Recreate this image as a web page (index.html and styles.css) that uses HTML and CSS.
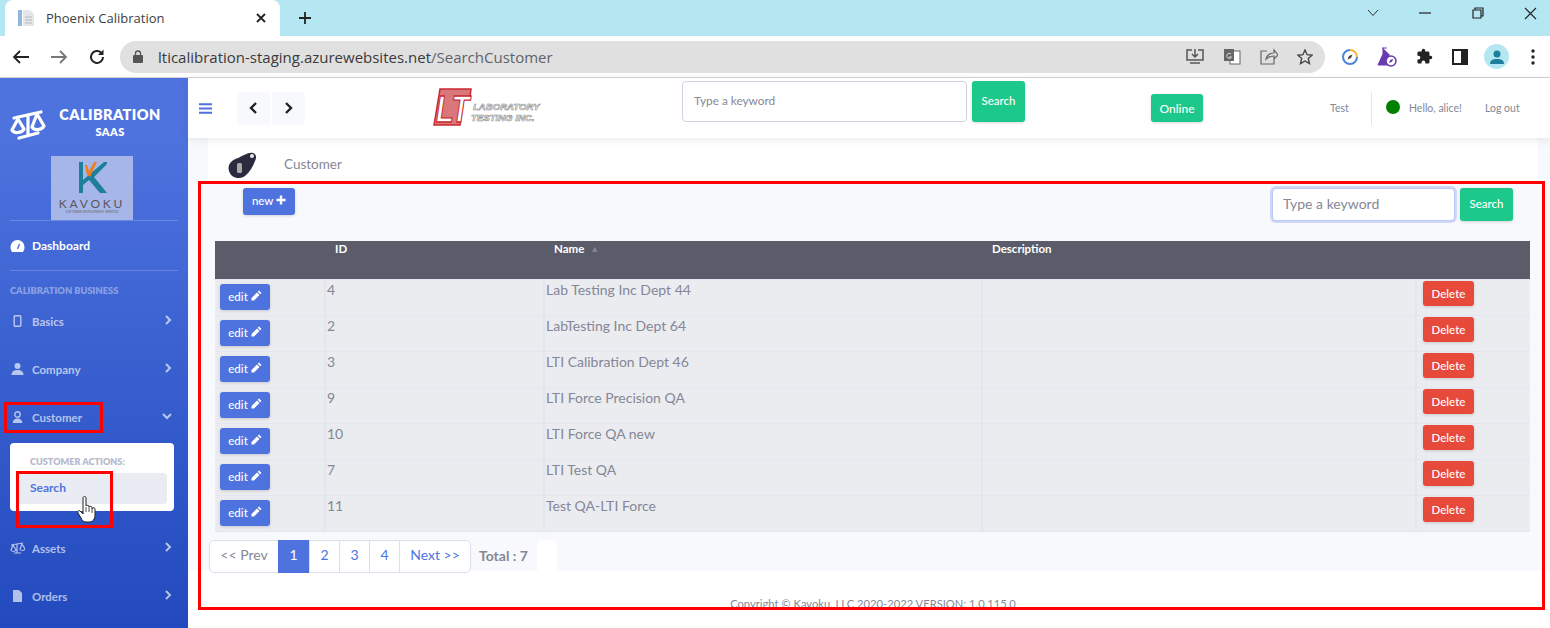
FILE: index.html
```html
<!DOCTYPE html>
<html lang="en">

<head>
    <meta charset="UTF-8" />
    <title>Phoenix Calibration</title>
    <link rel="stylesheet" href="styles.css">
</head>

<body>
    <!-- browser chrome -->
    <div class="tabbar">
        <div class="tab">
            <svg class="favicon" width="18" height="18" viewBox="0 0 18 18">
                <rect x="1" y="1" width="4" height="16" fill="#8fb8dc" />
                <path d="M6 1h7l4 4v12H6z" fill="#e4e6ea" />
                <path d="M8 8h7M8 11h7M8 14h7" stroke="#b5b9bf" stroke-width="1" />
            </svg>
            <span class="tab-title">Phoenix Calibration</span>
            <svg class="tab-close" width="12" height="12" viewBox="0 0 12 12">
                <path d="M2 2l8 8M10 2l-8 8" stroke="#222" stroke-width="1.8" />
            </svg>
        </div>
        <svg class="tab-new" width="14" height="14" viewBox="0 0 14 14">
            <path d="M7 1v12M1 7h12" stroke="#222" stroke-width="1.8" />
        </svg>
        <div class="win-btns">
            <svg width="12" height="8" viewBox="0 0 12 8"><path d="M1 1l5 5.500 5-5.500" fill="none" stroke="#333" stroke-width="1" /></svg>
            <svg width="12" height="2" viewBox="0 0 12 2"><path d="M0 1h12" stroke="#222" stroke-width="1.200" /></svg>
            <svg width="12" height="12" viewBox="0 0 12 12"><path d="M3 3V1h8v8H9M1 3h8v8H1z" fill="none" stroke="#222" stroke-width="1.200" /></svg>
            <svg width="13" height="13" viewBox="0 0 13 13"><path d="M1 1l11 11M12 1L1 12" stroke="#222" stroke-width="1.100" /></svg>
        </div>
    </div>
    <div class="toolbar">
        <svg width="18" height="16" viewBox="0 0 18 16"><path d="M17 8H2M8 2L2 8l6 6" fill="none" stroke="#222" stroke-width="1.800" /></svg>
        <svg width="18" height="16" viewBox="0 0 18 16"><path d="M1 8h15M10 2l6 6-6 6" fill="none" stroke="#777" stroke-width="1.800" /></svg>
        <svg class="reload" width="18" height="18" viewBox="0 0 18 18"><path d="M15 9a6 6 0 1 1-1.800-4.300" fill="none" stroke="#222" stroke-width="2" /><path d="M15.500 1.500v5.500H10z" fill="#222" /></svg>
        <div class="omnibox">
            <svg width="10" height="13" viewBox="0 0 10 13"><rect y="5" width="10" height="8" rx="1" fill="#555" /><path d="M2.500 5V3.500a2.500 2.500 0 0 1 5 0V5" fill="none" stroke="#555" stroke-width="1.300" /></svg>
            <span class="url"><span class="url-host">lticalibration-staging.azurewebsites.net</span>/SearchCustomer</span>
            <div class="omni-icons">
                <svg width="18" height="17" viewBox="0 0 18 17"><path d="M6 2H1v10h16V2h-5M9 1v7M6 6l3 3 3-3M4 15h10" fill="none" stroke="#555" stroke-width="1.500" /></svg>
                <svg width="18" height="17" viewBox="0 0 18 17"><rect x="7" y="3" width="10" height="13" fill="#fff" stroke="#666" /><rect x="1" y="1" width="10" height="12" fill="#666" /><path d="M8 6a2.500 2.500 0 1 0 .5 3H6" fill="none" stroke="#ddd" /></svg>
                <svg width="18" height="17" viewBox="0 0 18 17"><path d="M7 3H1v13h13v-5M6 11c1-4 4-6 8-6V2l4 5-4 4V8c-3 0-6 1-8 3z" fill="none" stroke="#666" stroke-width="1.200" /></svg>
                <svg width="16" height="16" viewBox="0 0 16 16"><path d="M8 1l2.100 4.700 5 .5-3.800 3.300 1.100 5L8 12l-4.400 2.500 1.100-5L.9 6.200l5-.5z" fill="none" stroke="#444" stroke-width="1.400" /></svg>
            </div>
        </div>
        <div class="ext-icons">
            <svg width="16" height="16" viewBox="0 0 16 16"><path d="M8 1a7 7 0 0 1 7 7" fill="none" stroke="#f0b93a" stroke-width="2" /><path d="M15 8a7 7 0 1 1-7-7" fill="none" stroke="#4a86d8" stroke-width="2" /><path d="M10.500 5.500L9 9 5.500 10.500 7 7z" fill="#444" /></svg>
            <svg width="20" height="20" viewBox="0 0 20 20"><path d="M5 1h5M6 1v6L1 18h11V7" fill="#6a3ab0" stroke="#6a3ab0" /><circle cx="14" cy="14" r="5" fill="#fff" stroke="#6a3ab0" stroke-width="1.500" /><path d="M12 16l1.200-3 3-1.200-1.200 3z" fill="#6a3ab0" /></svg>
            <svg width="17" height="17" viewBox="0 0 24 24"><path d="M20.500 11H19V7a2 2 0 0 0-2-2h-4V3.500a2.500 2.500 0 0 0-5 0V5H4a2 2 0 0 0-2 2v3.800h1.500a2.700 2.700 0 0 1 0 5.400H2V20a2 2 0 0 0 2 2h3.800v-1.500a2.700 2.700 0 0 1 5.400 0V22H17a2 2 0 0 0 2-2v-4h1.500a2.500 2.500 0 0 0 0-5z" fill="#222" /></svg>
            <svg width="16" height="16" viewBox="0 0 16 16"><rect x="1" y="1" width="14" height="14" fill="#fff" stroke="#222" stroke-width="2" /><rect x="9" y="1" width="6" height="14" fill="#222" /></svg>
            <div class="avatar">
                <svg width="16" height="16" viewBox="0 0 16 16"><circle cx="8" cy="5" r="3.500" fill="#1d7f9c" /><path d="M1 15c0-4 3-5 7-5s7 1 7 5z" fill="#1d7f9c" /></svg>
            </div>
            <svg class="kebab" width="4" height="16" viewBox="0 0 4 16"><circle cx="2" cy="2" r="1.700" fill="#222" /><circle cx="2" cy="8" r="1.700" fill="#222" /><circle cx="2" cy="14" r="1.700" fill="#222" /></svg>
        </div>
    </div>

    <div class="app">
        <aside class="sidebar">
            <div class="brand">
                <svg class="brand-icon" width="36" height="32" viewBox="0 0 36 32">
                    <g fill="none" stroke="#fff" stroke-width="3.200" stroke-linejoin="round" stroke-linecap="round">
                        <path d="M4 9L31 3M18 6v20M9 29l19-5" />
                        <path d="M8 10L2 21c2 4 10 3 12-1z" />
                        <path d="M27 5l-5 13c2 4 10 3 12-1z" />
                    </g>
                </svg>
                <div class="brand-text">
                    <div class="brand-name">CALIBRATION</div>
                    <div class="brand-sub">SAAS</div>
                </div>
            </div>
            <div class="client-logo">
                <svg width="28" height="31" viewBox="0 0 28 31">
                    <path d="M0 0h4v31H0z" fill="#1d7f9c" />
                    <path d="M4 18L25 0h3v2L15 15l13 16h-7L10 18l-6 5z" fill="#1d7f9c" />
                    <path d="M6 3h2l2 6 5-9h3l-7 15-3-2z" fill="#e8801e" />
                </svg>
                <div class="client-name">KAVOKU</div>
                <div class="client-tag">SOFTWARE DEVELOPMENT SERVICES</div>
            </div>
            <hr class="side-rule">
            <a class="nav-item nav-dash">
                <svg class="nav-icon" width="14" height="12" viewBox="0 0 14 12"><path d="M7 0a7 7 0 0 0-7 7c0 2 .6 3.500 1.500 5h11C13.400 10.500 14 9 14 7a7 7 0 0 0-7-7z" fill="#fff" /><path d="M7 9l2-5" stroke="#4a6fdb" stroke-width="1.400" /></svg>
                <span>Dashboard</span>
            </a>
            <hr class="side-rule">
            <div class="side-head">CALIBRATION BUSINESS</div>
            <a class="nav-item">
                <svg class="nav-icon" width="8" height="12" viewBox="0 0 8 12"><rect x=".7" y=".7" width="6.600" height="10.600" rx="1" fill="none" stroke="currentColor" stroke-width="1.400" /></svg>
                <span>Basics</span>
                <svg class="nav-caret" width="8" height="10" viewBox="0 0 8 10"><path d="M2 1l4 4-4 4" fill="none" stroke="currentColor" stroke-width="2" /></svg>
            </a>
            <a class="nav-item">
                <svg class="nav-icon" width="12" height="12" viewBox="0 0 12 12"><circle cx="6" cy="3" r="3" fill="currentColor" /><path d="M0 12c0-3 2-5 6-5s6 2 6 5z" fill="currentColor" /></svg>
                <span>Company</span>
                <svg class="nav-caret" width="8" height="10" viewBox="0 0 8 10"><path d="M2 1l4 4-4 4" fill="none" stroke="currentColor" stroke-width="2" /></svg>
            </a>
            <a class="nav-item">
                <svg class="nav-icon" width="11" height="12" viewBox="0 0 11 12"><circle cx="5.500" cy="3.500" r="2.700" fill="none" stroke="currentColor" stroke-width="1.400" /><path d="M.7 12c0-3 2-4.500 4.800-4.500s4.800 1.500 4.800 4.500z" fill="currentColor" /></svg>
                <span>Customer</span>
                <svg class="nav-caret" width="10" height="8" viewBox="0 0 10 8"><path d="M1 2l4 4 4-4" fill="none" stroke="currentColor" stroke-width="2" /></svg>
            </a>
            <div class="submenu">
                <div class="sub-head">CUSTOMER ACTIONS:</div>
                <a class="sub-item">Search</a>
            </div>
            <a class="nav-item">
                <svg class="nav-icon" width="15" height="12" viewBox="0 0 15 12"><path d="M1 3l12-2M7 2v9M4 11h7M3 3L1 8c1 2 4 2 5 0zM12 2l-2 5c1 2 4 2 5 0z" fill="none" stroke="currentColor" stroke-width="1.200" /></svg>
                <span>Assets</span>
                <svg class="nav-caret" width="8" height="10" viewBox="0 0 8 10"><path d="M2 1l4 4-4 4" fill="none" stroke="currentColor" stroke-width="2" /></svg>
            </a>
            <a class="nav-item">
                <svg class="nav-icon" width="9" height="12" viewBox="0 0 9 12"><path d="M0 0h6l3 3v9H0z" fill="currentColor" /></svg>
                <span>Orders</span>
                <svg class="nav-caret" width="8" height="10" viewBox="0 0 8 10"><path d="M2 1l4 4-4 4" fill="none" stroke="currentColor" stroke-width="2" /></svg>
            </a>
        </aside>

        <div class="main">
            <header class="topbar">
                <svg class="hamburger" width="13" height="11" viewBox="0 0 13 11"><path d="M0 1.200h13M0 5.500h13M0 9.800h13" stroke="#4e73df" stroke-width="2" /></svg>
                <button class="hist-btn"><svg width="9" height="12" viewBox="0 0 9 12"><path d="M7 1L2 6l5 5" fill="none" stroke="#222" stroke-width="2.400" /></svg></button>
                <button class="hist-btn"><svg width="9" height="12" viewBox="0 0 9 12"><path d="M2 1l5 5-5 5" fill="none" stroke="#222" stroke-width="2.400" /></svg></button>
                <svg class="lti-logo" width="110" height="40" viewBox="0 0 110 40">
                    <path d="M7 1h31l-1 8h-6l-4 28H1z" fill="#d9777a" stroke="#c92a2f" stroke-width="1.500" />
                    <text class="lti-mark" transform="translate(3 34) scale(1 1.300)">LT</text>
                    <text x="40" y="22" class="lti-word">LABORATORY</text>
                    <text x="38" y="33" class="lti-word">TESTING INC.</text>
                </svg>
                <div class="top-search">
                    <input class="top-input" type="text" placeholder="Type a keyword">
                    <button class="btn btn-green top-go">Search</button>
                </div>
                <button class="btn btn-green online">Online</button>
                <span class="top-link test">Test</span>
                <span class="top-div"></span>
                <span class="dot"></span>
                <span class="top-link hello">Hello, alice!</span>
                <span class="top-link logout">Log out</span>
            </header>

            <div class="page">
                <div class="crumb">
                    <svg class="crumb-icon" width="30" height="27" viewBox="0 0 30 27">
                        <path d="M25 1c3 1 4 4 2 8C25 14 22 20 17 24 11 28 3 26 1 19-1 12 4 8 10 6 15 4 20 0 25 1z" fill="#2b2b3f" />
                        <circle cx="24" cy="4" r="2" fill="#eee" />
                        <rect x="9" y="11" width="5" height="10" rx="1.500" fill="#aaa" />
                    </svg>
                    <span class="crumb-text">Customer</span>
                </div>
                <div class="panel">
                    <div class="panel-bar">
                        <button class="btn btn-blue new-btn">new <svg width="10" height="10" viewBox="0 0 10 10"><path d="M5 .5v9M.5 5h9" stroke="#fff" stroke-width="2.400" /></svg></button>
                        <div class="panel-search">
                            <input class="panel-input" type="text" placeholder="Type a keyword">
                            <button class="btn btn-green panel-go">Search</button>
                        </div>
                    </div>
                    <table class="grid">
                        <thead>
                            <tr>
                                <th class="col-edit"></th>
                                <th class="col-id">ID</th>
                                <th class="col-name">Name <span class="sort">&#9650;</span></th>
                                <th class="col-desc">Description</th>
                                <th class="col-del"></th>
                            </tr>
                        </thead>
                        <tbody id="rows"></tbody>
                    </table>
                    <div class="pager-row">
                        <div class="pager">
                            <a class="pg pg-prev">&lt;&lt; Prev</a>
                            <a class="pg pg-num pg-on">1</a>
                            <a class="pg pg-num">2</a>
                            <a class="pg pg-num">3</a>
                            <a class="pg pg-num">4</a>
                            <a class="pg pg-next">Next &gt;&gt;</a>
                        </div>
                        <span class="total">Total : 7</span>
                        <span class="total-box"></span>
                    </div>
                </div>
            </div>
            <div class="footer">Copyright &copy; Kavoku, LLC 2020-2022 VERSION: 1.0.115.0</div>
        </div>
    </div>

    <!-- red annotations drawn over the shot -->
    <div class="mark mark-panel"></div>
    <div class="mark mark-customer"></div>
    <div class="mark mark-search"></div>
    <svg class="hand" width="20" height="28" viewBox="0 0 20 28">
        <path d="M6 2c0-2 3-2 3 0v8c0-1 3-1 3 0v1c0-1 3-1 3 .5v1c0-1 3-1 3 .5v6c0 4-2 7-6 7H9c-3 0-4-2-5-4l-3-5c-1-2 1-3 2-2l3 3z" fill="#fff" stroke="#222" stroke-width="1" />
        <path d="M9 11v5M12 11v5M15 12v5" stroke="#222" stroke-width=".8" />
    </svg>

    <script>
        var customers = [
            ['4', 'Lab Testing Inc Dept 44'],
            ['2', 'LabTesting Inc Dept 64'],
            ['3', 'LTI Calibration Dept 46'],
            ['9', 'LTI Force Precision QA'],
            ['10', 'LTI Force QA new'],
            ['7', 'LTI Test QA'],
            ['11', 'Test QA-LTI Force']
        ];
        var pencil = '<svg width="11" height="11" viewBox="0 0 11 11"><path d="M8 .5l2.500 2.500-1.300 1.300-2.500-2.500zM6 2.500L8.500 5l-5.500 5.500H.5V8z" fill="#fff"/></svg>';
        var html = '';
        customers.forEach(function(c) {
            html += '<tr>' +
                '<td class="cell-edit"><button class="btn btn-blue edit-btn">edit ' + pencil + '</button></td>' +
                '<td>' + c[0] + '</td>' +
                '<td>' + c[1] + '</td>' +
                '<td></td>' +
                '<td class="cell-del"><button class="btn btn-red del-btn">Delete</button></td>' +
                '</tr>';
        });
        document.getElementById('rows').innerHTML = html;
    </script>
</body>

</html>
```

FILE: styles.css
```css
* {
    box-sizing: border-box;
}

html,
body {
    margin: 0;
    height: 628px;
    overflow: hidden;
}

body {
    position: relative;
    font-family: Lato, "Noto Sans", sans-serif;
    background: #fff;
    color: #858796;
}

button {
    font-family: inherit;
    border: none;
    cursor: pointer;
}

/* browser chrome */
.tabbar {
    height: 36px;
    background: #b5e7f3;
    display: flex;
    align-items: center;
    padding-left: 5px;
}

.tab {
    width: 275px;
    height: 36px;
    background: #fff;
    border-radius: 8px 8px 0 0;
    display: flex;
    align-items: center;
    padding: 0 13px 0 12px;
}

.tab-title {
    margin-left: 11px;
    flex: 1;
    font: 13px "Open Sans", sans-serif;
    color: #3c4043;
}

.tab-new {
    margin-left: 18px;
}

.win-btns {
    margin-left: auto;
    width: 183px;
    display: flex;
    justify-content: space-between;
    align-items: center;
    padding-right: 13px;
    margin-top: -10px;
}

.toolbar {
    height: 42px;
    background: #fff;
    border-bottom: 1px solid #d0d2d4;
    display: flex;
    align-items: center;
    padding-left: 12px;
    gap: 20px;
}

.reload {
    margin-right: -3px;
}

.omnibox {
    width: 1205px;
    height: 32px;
    margin-left: -3px;
    border-radius: 16px;
    background: #e0e0e0;
    display: flex;
    align-items: center;
    padding: 0 12px 0 13px;
}

.url {
    margin-left: 15px;
    font: 15px "Open Sans", sans-serif;
    color: #5f6368;
}

.url-host {
    color: #3a3a3a;
}

.omni-icons {
    margin-left: auto;
    display: flex;
    align-items: center;
    gap: 19px;
}

.ext-icons {
    display: flex;
    align-items: center;
    gap: 19px;
    margin-left: -3px;
}

.avatar {
    width: 25px;
    height: 25px;
    border-radius: 50%;
    background: #b5e7f3;
    display: flex;
    align-items: center;
    justify-content: center;
    margin-left: -3px;
}

.kebab {
    margin-left: 3px;
}

/* app shell */
.app {
    display: flex;
    height: 550px;
}

.sidebar {
    width: 188px;
    flex: none;
    background: linear-gradient(180deg, #4e73df 10%, #224abe 100%);
    color: rgba(255, 255, 255, 0.65);
}

.brand {
    height: 78px;
    display: flex;
    padding: 28px 0 0 10px;
}

.brand-icon {
    margin-top: 3px;
}

.brand-text {
    margin-left: 13px;
    width: 102px;
    text-align: center;
    color: #fff;
    font-weight: 800;
}

.brand-name {
    font-size: 14.500px;
    letter-spacing: 0.4px;
    line-height: 18px;
}

.brand-sub {
    font-size: 11px;
    line-height: 15px;
    letter-spacing: 0.4px;
}

.client-logo {
    width: 82px;
    height: 64px;
    margin-left: 51px;
    background: #a7b6e8;
    text-align: center;
    padding-top: 6px;
}

.client-logo svg {
    display: block;
    margin: 0 auto 5px 28px;
}

.client-name {
    font-size: 12px;
    letter-spacing: 2.800px;
    line-height: 12px;
    color: #55585f;
}

.client-tag {
    font-size: 3px;
    line-height: 5px;
    color: #666;
}

.side-rule {
    margin: 0 10px 0 10px;
    border: none;
    border-top: 1px solid rgba(255, 255, 255, 0.2);
}

.nav-item {
    height: 48px;
    display: flex;
    align-items: center;
    padding: 0 16px 2px 10px;
    font-size: 11.500px;
    font-weight: 700;
}

.nav-dash {
    height: 49px;
    padding-bottom: 0;
    color: #fff;
    font-size: 12px;
}

.nav-icon {
    width: 15px;
    margin-right: 7px;
    flex: none;
}

.nav-caret {
    margin-left: auto;
    margin-top: -3px;
}

.side-head {
    height: 27px;
    padding: 12px 0 0 10px;
    font-size: 9.300px;
    font-weight: 800;
    line-height: 15px;
    color: rgba(255, 255, 255, 0.4);
}

.submenu {
    width: 164px;
    height: 68px;
    margin: 1px 0 14px 10px;
    background: #fff;
    border-radius: 4px;
    padding: 13px 7px 0 7px;
}

.sub-head {
    font-size: 9.100px;
    font-weight: 800;
    line-height: 12px;
    padding-left: 13px;
    margin-bottom: 5px;
    color: #b7b9cc;
}

.sub-item {
    display: block;
    height: 31px;
    background: #eaecf4;
    border-radius: 4px;
    padding-left: 13px;
    padding-top: 7px;
    font-size: 12px;
    font-weight: 700;
    color: #4e73df;
}

.main {
    flex: 1;
    min-width: 0;
    background: #fff;
}

/* top bar */
.topbar {
    height: 60px;
    background: #fff;
    display: flex;
    align-items: center;
    padding-left: 11px;
    box-shadow: 0 2px 8px rgba(58, 59, 69, 0.1);
    position: relative;
}

.hamburger {
    margin-right: 25px;
}

.hist-btn {
    width: 33px;
    height: 33px;
    margin-right: 2px;
    background: #f8f9fc;
    border-radius: 4px;
    display: flex;
    align-items: center;
    justify-content: center;
}

.lti-logo {
    margin-left: 126px;
}

.lti-mark {
    font: italic 700 29px "Liberation Sans", sans-serif;
    fill: #fff;
    stroke: #c92a2f;
    stroke-width: 1;
}

.lti-word {
    font: italic 700 9.600px "Liberation Sans", sans-serif;
    fill: #fff;
    stroke: #8a8a8a;
    stroke-width: 0.6;
}

.top-search {
    margin-left: 139px;
    align-self: flex-start;
    margin-top: 3px;
    display: flex;
    gap: 5px;
}

.top-input {
    width: 285px;
    height: 41px;
    border: 1px solid #d1d3e2;
    border-radius: 4px;
    padding: 0 11px;
    font: 11.800px Lato, sans-serif;
    padding-bottom: 2px;
}

input::placeholder {
    color: #858796;
    opacity: 1;
}

.btn {
    color: #fff;
    border-radius: 3px;
    font-size: 11.500px;
    font-weight: 500;
    padding: 0;
    box-shadow: 0 1px 3px rgba(58, 59, 69, 0.2);
}

.btn-green {
    background: #1cc88a;
}

.btn-blue {
    background: #4e73df;
}

.btn-red {
    background: #e74a3b;
}

.top-go {
    width: 53px;
    height: 41px;
    padding-bottom: 3px;
}

.online {
    width: 52px;
    height: 28px;
    margin-left: 126px;
    font-size: 12px;
}

.top-link {
    font-size: 10.500px;
    color: #858796;
}

.test {
    margin-left: 127px;
    width: 22px;
}

.top-div {
    width: 1px;
    height: 33px;
    margin-left: 19px;
    background: #e3e6f0;
}

.dot {
    width: 14px;
    height: 14px;
    margin: -3px 0 0 14px;
    border-radius: 50%;
    background: #008000;
}

.hello {
    margin-left: 9px;
    width: 58px;
}

.logout {
    margin-left: 18px;
}

/* page */
.page {
    height: 433px;
    background: #f8f9fc;
}

.crumb {
    height: 44px;
    width: 1330px;
    margin-left: 20px;
    padding-left: 20px;
    background: #fff;
    display: flex;
    align-items: center;
}

.crumb-icon {
    margin-top: 10px;
}

.crumb-text {
    margin-left: 26px;
    margin-top: 8px;
    font-size: 13.500px;
    color: #858796;
}

.panel {
    width: 1342px;
    height: 389px;
    margin-left: 10px;
    background: #f8f9fc;
}

.panel-bar {
    height: 59px;
    padding: 6px 27px 0 45px;
    display: flex;
    justify-content: space-between;
    align-items: flex-start;
}

.new-btn {
    width: 52px;
    height: 27px;
    padding-bottom: 2px;
}

.panel-search {
    display: flex;
    gap: 5px;
}

.panel-input {
    width: 183px;
    height: 33px;
    border: 1px solid #bac8f3;
    box-shadow: 0 0 0 2px rgba(78, 115, 223, 0.25);
    border-radius: 4px;
    padding: 0 10px 3px;
    font: 14px Lato, sans-serif;
}

.panel-go {
    width: 53px;
    height: 33px;
    padding-bottom: 3px;
}

/* table */
.grid {
    width: 1315px;
    margin-left: 17px;
    border-collapse: collapse;
    table-layout: fixed;
    font-size: 14px;
}

.grid th {
    height: 38px;
    padding: 1px 0 0 10px;
    background: #5a5c69;
    color: #fff;
    font-size: 11.500px;
    font-weight: 700;
    text-align: left;
    vertical-align: top;
}

.sort {
    margin-left: 3px;
    font-size: 9px;
    color: #858796;
    vertical-align: 1px;
}

.col-edit {
    width: 110px;
}

.col-id {
    width: 219px;
}

.col-name {
    width: 438px;
}

.col-del {
    width: 114px;
}

.grid td {
    height: 36px;
    padding: 1px 0 0 1px;
    background: #eaecf0;
    border: 1px solid #e3e6f0;
    border-left: 2px solid #e3e6f0;
    color: #858796;
    line-height: 18px;
    vertical-align: top;
}

.grid td.cell-edit {
    padding: 4px 0 0 5px;
    border-left: none;
}

.grid td.cell-del {
    padding: 1px 0 0 6px;
    border-right: none;
}

.edit-btn {
    display: block;
    width: 50px;
    height: 26px;
}

.del-btn {
    display: block;
    width: 51px;
    height: 25px;
}

/* pager */
.pager-row {
    display: flex;
    align-items: center;
    margin: 8px 0 0 11px;
}

.pager {
    display: flex;
    height: 33px;
    background: #fff;
    border: 1px solid #dddfeb;
    border-radius: 5px;
    font-size: 14px;
    color: #4e73df;
}

.pg {
    display: flex;
    align-items: center;
    justify-content: center;
    padding-bottom: 3px;
    border-left: 1px solid #dddfeb;
}

.pg-prev {
    width: 68px;
    border-left: none;
    color: #858796;
}

.pg-num {
    width: 30px;
}

.pg-on {
    width: 31px;
    margin: -1px 0;
    background: #4e73df;
    color: #fff;
    border-left: none;
}

.pg-next {
    width: 71px;
}

.total {
    margin-left: 8px;
    width: 58px;
    padding-bottom: 1px;
    font-size: 14px;
    font-weight: 700;
    color: #858796;
}

.total-box {
    width: 20px;
    height: 33px;
    background: #fff;
    border-radius: 5px;
}

.footer {
    width: 1330px;
    margin: 26px 0 0 20px;
    text-align: center;
    font-size: 11.200px;
    line-height: 13px;
    color: #858796;
}

/* annotations */
.mark {
    position: absolute;
    border: 3px solid #f00;
}

.mark-panel {
    left: 198px;
    top: 181px;
    width: 1347px;
    height: 429px;
}

.mark-customer {
    left: 4px;
    top: 402px;
    width: 99px;
    height: 31px;
}

.mark-search {
    left: 16px;
    top: 471px;
    width: 97px;
    height: 57px;
}

.hand {
    position: absolute;
    left: 77px;
    top: 496px;
}
```
